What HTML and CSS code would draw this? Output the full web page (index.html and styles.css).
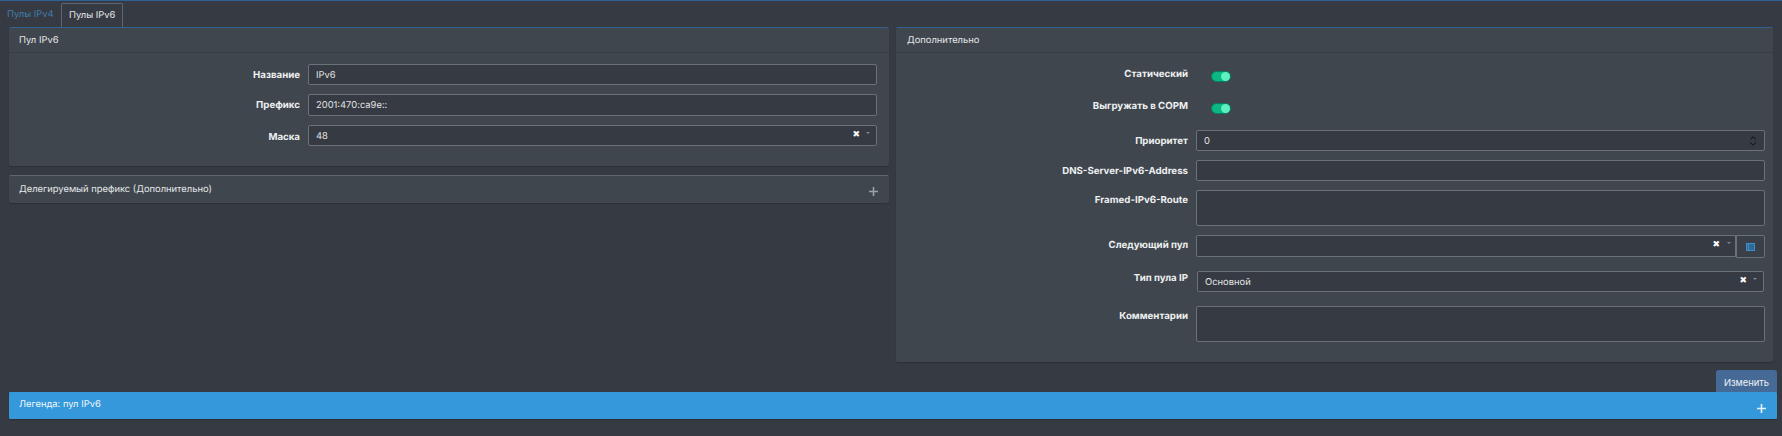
FILE: index.html
```html
<!DOCTYPE html>
<html lang="ru">
<head>
<meta charset="utf-8">
<title>Пулы IPv6</title>
<link rel="stylesheet" href="styles.css">
</head>
<body>
<nav class="tabs">
  <a class="tab">Пулы IPv4</a>
  <a class="tab tab-active">Пулы IPv6</a>
</nav>
<main class="columns">
  <div class="col col-left">
    <section class="panel panel-main">
      <header class="panel-head">Пул IPv6</header>
      <div class="panel-body body-left">
        <div class="row r-name"><label class="lbl">Название</label><div class="field f-h21">IPv6</div></div>
        <div class="row r-prefix"><label class="lbl">Префикс</label><div class="field f-h22">2001:470:ca9e::</div></div>
        <div class="row r-mask"><label class="lbl">Маска</label><div class="field f-h21 select">48<span class="x">✖</span><span class="caret"></span></div></div>
      </div>
    </section>
    <section class="panel panel-collapsed">
      <span>Делегируемый префикс (Дополнительно)</span>
      <svg class="plus" viewBox="0 0 9 9"><path d="M4.5 0v9M0 4.5h9"/></svg>
    </section>
  </div>
  <section class="panel panel-right">
    <header class="panel-head head-right">Дополнительно</header>
    <div class="panel-body body-right">
      <div class="row rr r-static"><label class="lbl lbl-top">Статический</label><span class="toggle"></span></div>
      <div class="row rr r-export"><label class="lbl lbl-top">Выгружать в СОРМ</label><span class="toggle"></span></div>
      <div class="row rr r-prio"><label class="lbl">Приоритет</label><div class="field f-h21 spin">0
        <svg class="spinner" viewBox="0 0 8 10"><path d="M1 3.5 4 .8 7 3.5M1 6.5 4 9.2 7 6.5"/></svg></div></div>
      <div class="row rr r-dns"><label class="lbl">DNS-Server-IPv6-Address</label><div class="field f-h21"></div></div>
      <div class="row rr r-route"><label class="lbl lbl-top">Framed-IPv6-Route</label><div class="field f-h36"></div></div>
      <div class="row rr r-next"><label class="lbl">Следующий пул</label>
        <div class="group">
          <div class="field f-h22 select grow"><span class="x">✖</span><span class="caret"></span></div>
          <div class="addon"><svg class="list-ico" viewBox="0 0 9 8"><rect width="9" height="8" fill="#3a8ec9"/><path d="M1 2h1M3 2h5M1 4h1M3 4h5M1 6h1M3 6h5" stroke="#26455f" stroke-width="1"/></svg></div>
        </div>
      </div>
      <div class="row rr r-type"><label class="lbl lbl-top">Тип пула IP</label><div class="field f-h21 select type-field">Основной<span class="x">✖</span><span class="caret"></span></div></div>
      <div class="row rr r-comment"><label class="lbl lbl-top">Комментарии</label><div class="field f-h36"></div></div>
    </div>
  </section>
</main>
<div class="actions"><button class="btn">Изменить</button></div>
<section class="legend">
  <span>Легенда: пул IPv6</span>
  <svg class="plus plus-white" viewBox="0 0 9 9"><path d="M4.5 0v9M0 4.5h9"/></svg>
</section>
</body>
</html>
```
FILE: styles.css
```css
* { box-sizing: border-box; }
html, body { height: 100%; }
body {
  margin: 0;
  height: 436px;
  overflow: hidden;
  background: #363a42;
  border-top: 1px solid #2f5f94;
  color: #e6e8ea;
  font: 9.4px/14px Inter, "Liberation Sans", sans-serif;
  text-rendering: geometricPrecision;
}
.tabs { display: flex; height: 26px; padding: 2px 0 0 7px; }
.tab { padding: 5px 0 0; color: #3f7ead; width: 54px; }
.tab-active {
  width: 62px;
  padding: 5px 0 0 7px;
  color: #e6e8ea;
  border: 1px solid #5f666d;
  border-bottom: 0;
  border-radius: 2px 2px 0 0;
}
.columns { display: flex; gap: 7px; padding: 0 9px; align-items: flex-start; }
.col-left { width: 880px; display: flex; flex-direction: column; gap: 9px; }
.panel { background: #3f464d; border-radius: 2px; box-shadow: 0 1px 1px #2d3036; }
.panel-main { height: 139px; border-top: 1px solid #34618f; }
.panel-right { width: 877px; height: 335px; border-top: 1px solid #34618f; }
.panel-head { height: 25px; padding: 6px 11px 0 10px; border-bottom: 1px solid #383e45; }
.head-right { padding-left: 11px; }
.panel-collapsed {
  height: 28px;
  border-top: 1px solid #5f666d;
  padding: 7px 11px 0 10px;
  display: flex;
  justify-content: space-between;
}
.plus { width: 9px; height: 9px; stroke: #9aa1a8; stroke-width: 1.6; fill: none; margin: 4px 0 0; }
.plus-white { stroke: #e4f0fa; margin: 6px 0 0; }
.panel-body { display: flex; flex-direction: column; }
.body-left { padding-top: 11px; }
.row { display: flex; gap: 8px; padding-right: 12px; }
.r-prefix { margin-top: 9px; }
.r-mask { margin-top: 9px; }
.r-mask .lbl { padding-top: 6px; }
.rr { padding-right: 8px; }
.r-static { margin-top: 15px; height: 32px; }
.r-export { height: 17px; }
.r-prio { margin-top: 13px; }
.r-dns, .r-route, .r-next { margin-top: 9px; }
.r-type { margin-top: 13px; }
.r-comment { margin-top: 14px; }
.lbl {
  width: 291px;
  flex: none;
  text-align: right;
  font-weight: 700;
  font-size: 9.7px;
  color: #eef0f1;
  padding-top: 5px;
}
.rr .lbl { width: 292px; }
.lbl-top { padding-top: 0; }
.r-route .lbl { padding-top: 4px; }
.r-next .lbl { padding-top: 4px; }
.r-type .lbl { padding-top: 1px; }
.r-comment .lbl { padding-top: 4px; }
.field {
  flex: 1;
  min-width: 0;
  position: relative;
  background: #363a42;
  border: 1px solid #6a7178;
  border-radius: 2px;
  padding: 4px 7px 0;
  color: #e2e4e6;
}
.f-h21 { height: 21px; }
.f-h22 { height: 22px; }
.f-h36 { height: 36px; }
.select .x {
  position: absolute;
  right: 16px;
  top: 2px;
  font: 700 9px/14px "DejaVu Sans", sans-serif;
  color: #fff;
}
.select .caret {
  position: absolute;
  right: 6px;
  top: 6px;
  width: 0;
  height: 0;
  border: 2.5px solid transparent;
  border-top-color: #80868d;
  border-bottom: 0;
}
.spinner {
  position: absolute;
  right: 7px;
  top: 5px;
  width: 8px;
  height: 10px;
  stroke: #0f1114;
  stroke-width: 1;
  fill: none;
}
.toggle {
  width: 20px;
  height: 11px;
  margin: 3px 0 0 15px;
  border-radius: 6px;
  background: #0bb783;
  border: 1px solid #0a7f5e;
  position: relative;
}
.toggle::after {
  content: "";
  position: absolute;
  right: 0;
  top: 0;
  width: 9px;
  height: 9px;
  border-radius: 50%;
  background: #5df0c0;
}
.group { flex: 1; display: flex; min-width: 0; }
.grow { border-radius: 2px 0 0 2px; }
.grow .x { right: 15px; }
.grow .caret { right: 4px; }
.addon {
  width: 29px;
  height: 23px;
  flex: none;
  background: #3a4048;
  border: 1px solid #6a7178;
  border-radius: 0 2px 2px 0;
  display: flex;
  align-items: center;
  justify-content: center;
}
.list-ico { width: 9px; height: 8px; }
.type-field { margin: 0 1px; }
.actions { display: flex; justify-content: flex-end; padding: 8px 5px 0 0; }
.btn {
  height: 22px;
  width: 61px;
  border: 0;
  border-radius: 3px 3px 0 0;
  padding: 4px 0 0;
  background: #466a96;
  color: #eef2f6;
  font: inherit;
}
.legend {
  height: 27px;
  margin: 0 5px 0 9px;
  padding: 6px 11px 0 10px;
  background: #3498db;
  color: #f2f7fb;
  display: flex;
  justify-content: space-between;
  box-shadow: 0 1px 1px #2d3036;
  border-radius: 1px;
}
```
